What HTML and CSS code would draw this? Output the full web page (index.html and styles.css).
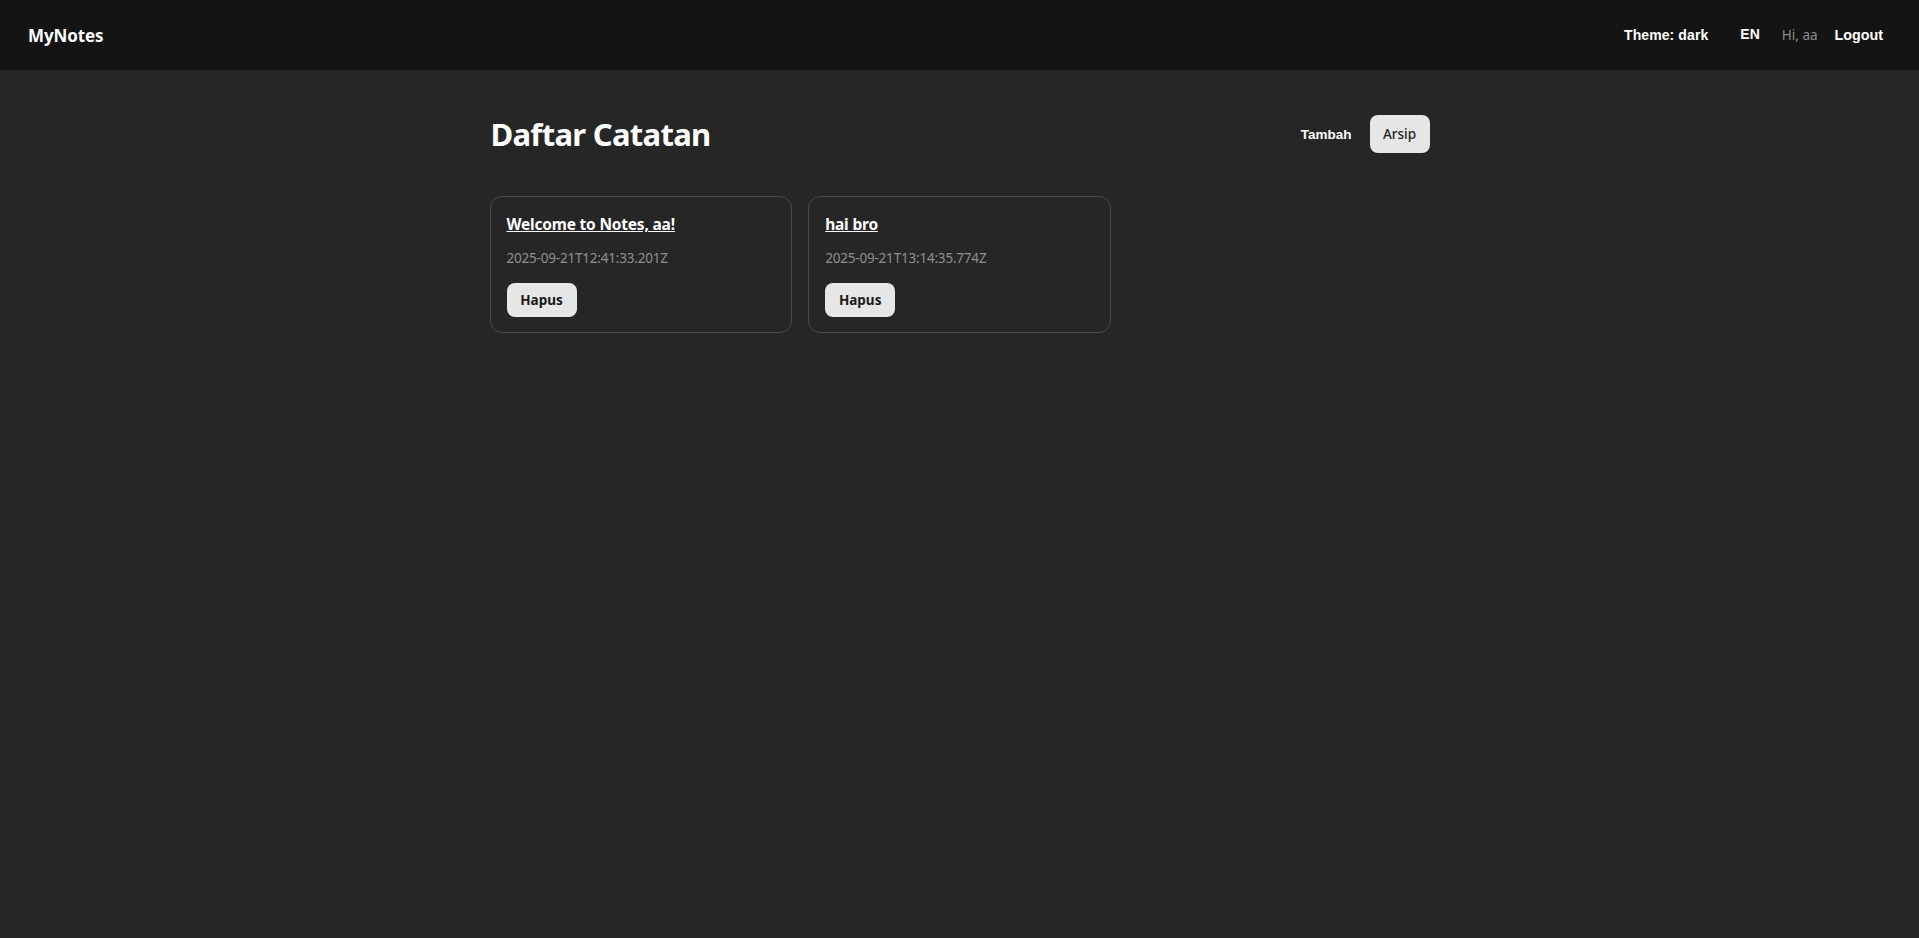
FILE: index.html
```html
<!DOCTYPE html>
<html lang="id">
<head>
<meta charset="utf-8">
<title>MyNotes</title>
<link rel="stylesheet" href="styles.css">
</head>
<body>
<header class="topbar">
  <h1 class="brand">MyNotes</h1>
  <nav class="topnav">
    <button class="nav-btn theme-btn">Theme: dark</button>
    <button class="nav-btn lang-btn">EN</button>
    <span class="greet">Hi, aa</span>
    <button class="nav-btn logout-btn">Logout</button>
  </nav>
</header>
<main class="page">
  <div class="page-head">
    <h2 class="page-title">Daftar Catatan</h2>
    <div class="actions">
      <button class="link-btn">Tambah</button>
      <button class="pill-btn">Arsip</button>
    </div>
  </div>
  <div class="notes">
    <article class="note">
      <a class="note-title" href="#">Welcome to Notes, aa!</a>
      <p class="note-date">2025-09-21T12:41:33.201Z</p>
      <button class="del-btn">Hapus</button>
    </article>
    <article class="note">
      <a class="note-title" href="#">hai bro</a>
      <p class="note-date">2025-09-21T13:14:35.774Z</p>
      <button class="del-btn">Hapus</button>
    </article>
  </div>
</main>
</body>
</html>
```
FILE: styles.css
```css
* { box-sizing: border-box; }
html, body { height: 100%; }
body {
  margin: 0;
  background: #262626;
  color: #fff;
  font-family: "Noto Sans", "Open Sans", sans-serif;
}
.topbar {
  height: 70px;
  background: #141414;
  display: flex;
  align-items: center;
  justify-content: space-between;
  padding: 0 36px 0 28px;
}
.brand {
  margin: 0;
  font-size: 17px;
  font-weight: 700;
  letter-spacing: -0.1px;
}
.topnav {
  display: flex;
  align-items: center;
}
.nav-btn {
  background: none;
  border: none;
  color: #fff;
  font-family: "Liberation Sans", Arial, sans-serif;
  font-weight: 700;
  font-size: 14px;
  padding: 0;
  cursor: pointer;
}
.theme-btn { letter-spacing: 0.1px; }
.lang-btn { margin-left: 32px; margin-top: -3px; }
.greet {
  margin-left: 22px;
  color: #8a8a8a;
  font-size: 13.5px;
}
.logout-btn { margin-left: 17px; font-size: 14.3px; }
.page {
  max-width: 940px;
  margin: 0 auto;
  padding-top: 44px;
}
.page-head {
  display: flex;
  justify-content: space-between;
  align-items: center;
}
.page-title {
  margin: 0;
  font-size: 31px;
  font-weight: 700;
  letter-spacing: -0.7px;
  padding-left: 1px;
  line-height: 40px;
}
.actions {
  display: flex;
  align-items: center;
  gap: 18px;
}
.link-btn {
  background: none;
  border: none;
  color: #fff;
  font-family: "Liberation Sans", Arial, sans-serif;
  font-weight: 700;
  font-size: 13.5px;
  padding: 0;
}
.pill-btn {
  height: 38px;
  width: 60px;
  border: none;
  border-radius: 8px;
  background: #e6e6e6;
  color: #222;
  font-family: "Noto Sans", sans-serif;
  font-size: 13.5px;
  font-weight: 500;
  padding: 0;
}
.notes {
  margin-top: 42px;
  display: grid;
  grid-template-columns: repeat(3, 1fr);
  gap: 16px;
}
.note {
  border: 1px solid #4a4a4a;
  border-radius: 12px;
  padding: 17px 16px 15px;
  display: flex;
  flex-direction: column;
  align-items: flex-start;
}
.note-title {
  color: #fff;
  font-weight: 700;
  font-size: 15.5px;
  letter-spacing: -0.2px;
  text-decoration: underline;
  line-height: 20px;
}
.note-date {
  margin: 14px 0 15px;
  color: #8f8f8f;
  font-size: 13.5px;
  line-height: 20px;
  letter-spacing: -0.2px;
}
.del-btn {
  height: 34px;
  width: 70px;
  border: none;
  border-radius: 8px;
  background: #e6e6e6;
  color: #1a1a1a;
  font-family: "Noto Sans", sans-serif;
  font-weight: 700;
  font-size: 13.5px;
  padding: 0;
}
```
